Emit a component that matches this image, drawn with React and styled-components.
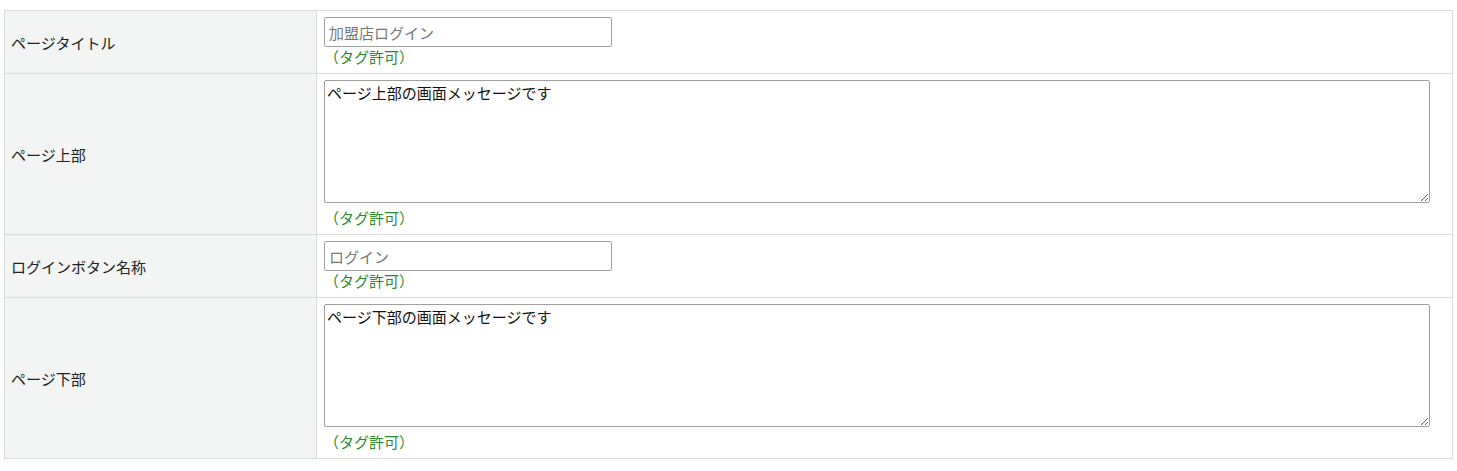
import React from "react";
import styled, { createGlobalStyle } from "styled-components";

const Global = createGlobalStyle`
  html, body { margin: 0; padding: 0; background: #fff; }
  body {
    font-family: "Noto Sans CJK JP", "Noto Sans", sans-serif;
    font-size: 15px;
    color: #333;
  }
`;

const Page = styled.div`
  padding: 10px 4px 0 4px;
`;

const Table = styled.table`
  width: 1449px;
  border-collapse: collapse;
  border: 1px solid #dcdcdc;
`;

const Label = styled.th`
  width: 299px;
  background: #f3f4f4;
  border: 1px solid #dcdcdc;
  text-align: left;
  font-weight: normal;
  font-size: 15px;
  color: #222;
  padding: 0 6px;
  vertical-align: middle;
`;

const Cell = styled.td`
  border: 1px solid #dcdcdc;
  padding: 6px 7px 7px 7px;
  vertical-align: top;
  background: #fff;
`;

const TextInput = styled.input`
  display: block;
  box-sizing: border-box;
  width: 288px;
  height: 30px;
  margin: 0;
  padding: 0 4px;
  border: 1px solid #a0a0a0;
  border-radius: 2px;
  font-family: inherit;
  font-size: 15px;
  color: #222;
  &::placeholder { color: #777; }
`;

const TextArea = styled.textarea`
  display: block;
  box-sizing: border-box;
  width: 1106px;
  height: 123px;
  margin: 0 0 5px 0;
  padding: 2px 2px;
  border: 1px solid #a0a0a0;
  border-radius: 2px;
  font-family: inherit;
  font-size: 15px;
  line-height: 1.35;
  color: #111;
  resize: vertical;
`;

const Tag = styled.div`
  height: 19px;
  line-height: 19px;
  font-size: 15px;
  color: #2c8a2c;
`;

const rows = [
  { label: "ページタイトル", kind: "input", placeholder: "加盟店ログイン" },
  { label: "ページ上部", kind: "area", value: "ページ上部の画面メッセージです" },
  { label: "ログインボタン名称", kind: "input", placeholder: "ログイン" },
  { label: "ページ下部", kind: "area", value: "ページ下部の画面メッセージです" },
];

export default function App() {
  return (
    <>
      <Global />
      <Page>
        <Table>
          <tbody>
            {rows.map((r) => (
              <tr key={r.label}>
                <Label>{r.label}</Label>
                <Cell>
                  {r.kind === "input" ? (
                    <TextInput type="text" placeholder={r.placeholder} />
                  ) : (
                    <TextArea defaultValue={r.value} />
                  )}
                  <Tag>（タグ許可）</Tag>
                </Cell>
              </tr>
            ))}
          </tbody>
        </Table>
      </Page>
    </>
  );
}
